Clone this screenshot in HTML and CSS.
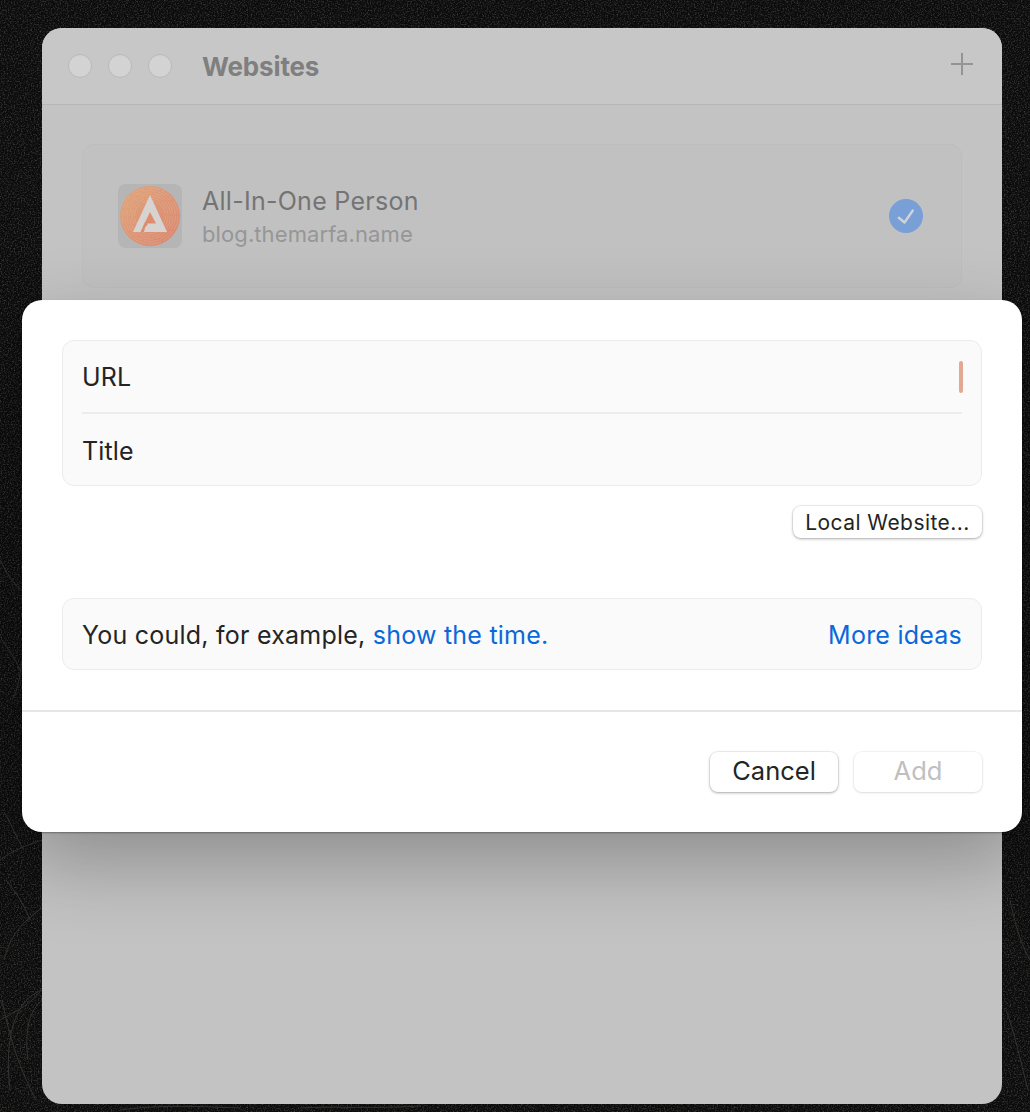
FILE: index.html
```html
<!DOCTYPE html>
<html lang="en">
<head>
    <meta charset="UTF-8">
    <meta name="viewport" content="width=device-width, initial-scale=1.0">
    <title>Websites</title>
    <link rel="stylesheet" href="styles.css">
</head>
<body>
    <div class="desktop">
        <!-- wallpaper grain and scratches -->
        <svg class="wallpaper" width="1030" height="1112" viewBox="0 0 1030 1112" fill="none" stroke="#333331" stroke-width="1">
            <defs>
                <filter id="grain" x="0" y="0" width="100%" height="100%">
                    <feTurbulence type="fractalNoise" baseFrequency="0.7" numOctaves="2"/>
                    <feColorMatrix type="matrix" values="0 0 0 0 0.16  0 0 0 0 0.16  0 0 0 0 0.15  0 0 0 1.2 -0.55"/>
                </filter>
            </defs>
            <rect width="1030" height="1112" filter="url(#grain)" stroke="none"/>
            <path d="M4 960 C12 930 26 920 42 908"/>
            <path d="M0 860 C14 850 24 846 42 840"/>
            <path d="M10 1090 C4 1040 14 1000 42 990"/>
            <path d="M28 1060 C24 1030 30 1010 42 1000"/>
            <path d="M4 812 C10 820 14 834 24 850"/>
            <path d="M0 1020 C14 1012 26 1008 40 992"/>
            <path d="M12 700 C18 690 20 676 22 660"/>
            <path d="M0 560 C6 572 14 586 22 590"/>
            <path d="M2 640 C8 650 14 655 20 670"/>
            <path d="M6 880 C14 890 22 900 30 920"/>
            <path d="M2 1000 C10 1040 20 1070 36 1100"/>
            <path d="M1004 420 C1012 440 1020 450 1030 456"/>
            <path d="M1010 900 C1016 930 1024 950 1030 960"/>
            <path d="M1006 1010 C1014 1030 1020 1060 1028 1090"/>
            <path d="M120 1110 C160 1105 190 1106 240 1108"/>
            <path d="M300 1108 C340 1106 370 1109 420 1106"/>
        </svg>

        <div class="window">
            <div class="titlebar">
                <span class="light"></span>
                <span class="light"></span>
                <span class="light"></span>
                <div class="window-title">Websites</div>
                <svg class="plus" width="24" height="24" viewBox="0 0 24 24" stroke="#949494" stroke-width="2">
                    <path d="M12 1V23M1 12H23"/>
                </svg>
            </div>
            <div class="window-body">
                <div class="site-card">
                    <div class="site-icon">
                        <svg width="60" height="60" viewBox="0 0 60 60" fill="none">
                            <defs>
                                <linearGradient id="badge" x1="0" y1="0" x2="1" y2="1">
                                    <stop offset="0" stop-color="#dfa67c"/>
                                    <stop offset="1" stop-color="#d98570"/>
                                </linearGradient>
                            </defs>
                            <circle cx="30" cy="30" r="30" fill="url(#badge)"/>
                            <g stroke="#ecc09c" stroke-width="0.7" stroke-opacity="0.45" stroke-dasharray="14 2">
                                <circle cx="30" cy="30" r="28"/>
                                <circle cx="30" cy="30" r="25.500"/>
                                <circle cx="30" cy="30" r="23"/>
                                <circle cx="30" cy="30" r="20.500"/>
                                <circle cx="30" cy="30" r="18"/>
                                <circle cx="30" cy="30" r="15.500"/>
                            </g>
                            <path d="M30 9L47 46H13Z" fill="#d6d3d0"/>
                            <path d="M30 26L36 37.500H24.500Z" fill="#dd8d6c"/>
                            <path d="M25 36L28 38L25 41.500L24 46H20.500Z" fill="#dd8d6c"/>
                        </svg>
                    </div>
                    <div class="site-text">
                        <div class="site-name">All-In-One Person</div>
                        <div class="site-url">blog.themarfa.name</div>
                    </div>
                    <div class="site-check">
                        <svg width="20" height="20" viewBox="0 0 20 20" fill="none" stroke="#d0d3d6" stroke-width="2.400" stroke-linecap="round" stroke-linejoin="round">
                            <path d="M2.800 11.800L8.500 16.500L16.800 4.500"/>
                        </svg>
                    </div>
                </div>
            </div>
        </div>

        <div class="sheet">
            <div class="sheet-main">
                <div class="field-group">
                    <div class="field">
                        <span>URL</span>
                        <span class="caret"></span>
                    </div>
                    <div class="field">
                        <span>Title</span>
                    </div>
                </div>
                <div class="local-row">
                    <button class="btn btn-small">Local Website...</button>
                </div>
                <div class="hint">
                    <div>You could, for example, <a href="#" class="link">show the time.</a></div>
                    <a href="#" class="link">More ideas</a>
                </div>
            </div>
            <div class="sheet-footer">
                <button class="btn btn-large">Cancel</button>
                <button class="btn btn-large btn-disabled">Add</button>
            </div>
        </div>
    </div>
</body>
</html>
```

FILE: styles.css
```css
* {
    box-sizing: border-box;
}
body {
    margin: 0;
    background-color: #0c0c0c;
    font-family: Inter, "Liberation Sans", sans-serif;
    color: #242424;
}
.desktop {
    position: relative;
    width: 1030px;
    height: 1112px;
    padding: 28px 28px 8px 42px;
    overflow: hidden;
}
.wallpaper {
    position: absolute;
    left: 0;
    top: 0;
}
.window {
    position: relative;
    height: 1076px;
    background-color: #c3c3c3;
    border-radius: 20px;
    overflow: hidden;
}
.titlebar {
    display: flex;
    align-items: center;
    gap: 16px;
    height: 77px;
    padding: 0 28px 1px 26px;
    background-color: #c7c7c7;
    border-bottom: 1px solid #b6b6b6;
}
.light {
    width: 24px;
    height: 24px;
    border-radius: 50%;
    background-color: #d3d3d3;
    border: 1px solid #b9b9b9;
}
.window-title {
    flex: 1;
    margin-left: 14px;
    padding-top: 2px;
    font-size: 26px;
    font-weight: 700;
    letter-spacing: -0.15px;
    color: #7f7f7f;
}
.plus {
    margin-bottom: 4px;
}
.window-body {
    padding: 39px 40px;
}
.site-card {
    display: flex;
    align-items: center;
    height: 144px;
    padding: 0 38px 0 35px;
    border: 1px solid #bdbdbd;
    border-radius: 12px;
    background-color: #c1c1c1;
}
.site-icon {
    display: flex;
    align-items: center;
    justify-content: center;
    width: 64px;
    height: 64px;
    border-radius: 8px;
    background-color: #b5b5b5;
}
.site-text {
    flex: 1;
    margin-left: 20px;
}
.site-name {
    padding-top: 1px;
    font-size: 25px;
    line-height: 30px;
    letter-spacing: 0.27px;
    color: #747474;
}
.site-url {
    margin-top: 5px;
    font-size: 22px;
    line-height: 26px;
    letter-spacing: 0.1px;
    color: #969696;
}
.site-check {
    display: flex;
    align-items: center;
    justify-content: center;
    width: 34px;
    height: 34px;
    border-radius: 50%;
    background-color: #789fd6;
}
.sheet {
    position: absolute;
    left: 22px;
    top: 300px;
    width: 1000px;
    height: 532px;
    background-color: #fff;
    border-radius: 20px;
    box-shadow: 0 1px 2px rgba(0,0,0,0.35), 0 30px 80px rgba(0,0,0,0.28);
}
.sheet-main {
    height: 412px;
    padding: 40px;
    border-bottom: 2px solid #e6e6e6;
}
.field-group {
    padding: 0 19px;
    background-color: #fafafa;
    border: 1px solid #ececec;
    border-radius: 12px;
}
.field {
    display: flex;
    align-items: center;
    justify-content: space-between;
    height: 71px;
    font-size: 25px;
    letter-spacing: 0.15px;
}
.field + .field {
    height: 73px;
    padding-top: 3px;
    border-top: 2px solid #ececec;
}
.caret {
    width: 4px;
    height: 32px;
    margin-right: -1px;
    border-radius: 2px;
    background-color: #e2a893;
}
.local-row {
    display: flex;
    justify-content: flex-end;
    margin-top: 20px;
}
.btn {
    font-family: Inter, "Liberation Sans", sans-serif;
    color: #242424;
    background-color: #fff;
    border: none;
    border-radius: 8px;
    box-shadow: 0 0 0 1px rgba(0,0,0,0.05), 0 1px 3px rgba(0,0,0,0.3);
}
.btn-small {
    width: 189px;
    height: 32px;
    padding: 0;
    font-size: 21px;
    letter-spacing: 0.45px;
}
.btn-large {
    width: 128px;
    height: 40px;
    padding: 0 0 3px;
    font-size: 25.500px;
}
.btn-disabled {
    color: #bfbfbf;
    box-shadow: 0 0 0 1px rgba(0,0,0,0.04), 0 1px 3px rgba(0,0,0,0.1);
}
.hint {
    display: flex;
    align-items: center;
    justify-content: space-between;
    height: 72px;
    margin-top: 60px;
    padding: 2px 19px 0 19px;
    font-size: 25px;
    letter-spacing: 0.23px;
    background-color: #fafafa;
    border: 1px solid #ececec;
    border-radius: 12px;
}
.link {
    color: #0a68d8;
    text-decoration: none;
}
.sheet-footer {
    display: flex;
    justify-content: flex-end;
    gap: 16px;
    padding: 40px 40px 0;
}
```
